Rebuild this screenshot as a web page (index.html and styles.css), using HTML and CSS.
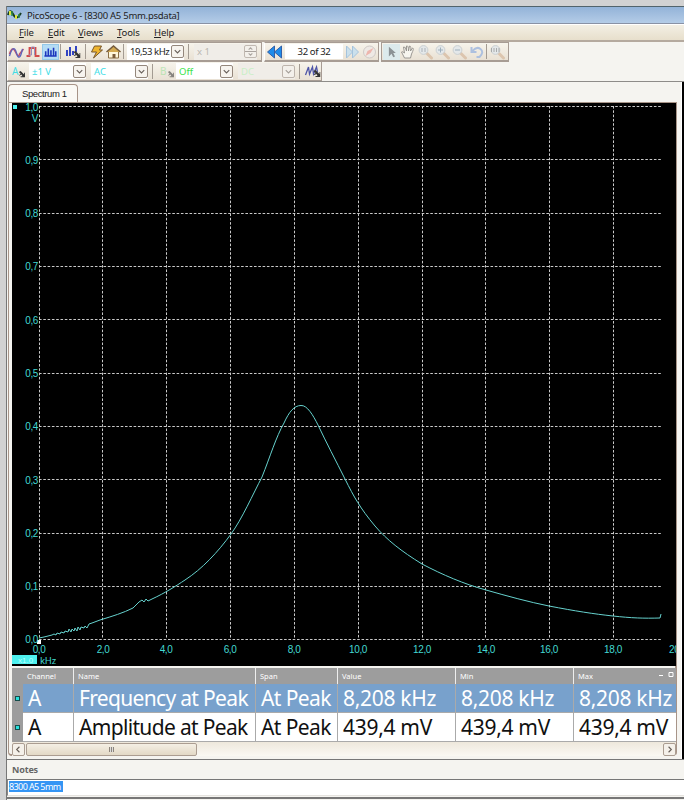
FILE: index.html
```html
<!DOCTYPE html>
<html lang="en">
<head>
	<meta charset="utf-8">
	<title>PicoScope 6 - [8300 A5 5mm.psdata]</title>
	<link rel="stylesheet" href="styles.css">
</head>
<body>
<svg width="0" height="0" class="defs">
	<symbol id="lens" viewBox="0 0 16 16">
		<path d="M9 9l5 5" stroke="#dcc5ae" stroke-width="3" stroke-linecap="round"/>
		<circle cx="6" cy="6" r="4.4" fill="#e4e8ea" stroke="#cbd0d2"/>
	</symbol>
	<symbol id="arrow" viewBox="0 0 8 8"><path d="M1 1l2 2-2 2h1l2-1 1 2H3v1h5V2H7v2L5 2 3 0z" fill="#333"/></symbol>
</svg>
<div class="window">
	<div class="title">
		<svg width="15" height="14"><path d="M1 7Q3 0 6 6T12 8L14 5" fill="none" stroke="#173c22" stroke-width="2"/><path d="M3 3v4M9 7v4" stroke="#dce83c" stroke-width="2"/><path d="M5 3v5M12 6v4" stroke="#2c8b4a" stroke-width="1.500"/></svg>
		<span>PicoScope 6 - [8300 A5 5mm.psdata]</span>
	</div>
	<div class="menu">
		<span class="m1"><u>F</u>ile</span><span class="m2"><u>E</u>dit</span><span class="m3"><u>V</u>iews</span><span class="m4"><u>T</u>ools</span><span class="m5"><u>H</u>elp</span>
	</div>

	<div class="bar">
		<div class="group modes">
			<svg class="ico" viewBox="0 0 16 16"><path d="M1 10Q4 1 7 8T11 10L15 5" fill="none" stroke="#c3526a" stroke-width="1.500"/><path d="M1 12Q5-1 8 9T14 5" fill="none" stroke="#5b65bd" stroke-width="1.300"/></svg>
			<svg class="ico" viewBox="0 0 16 16"><path d="M1 12h3V4h6v8h4" fill="none" stroke="#d34a4a" stroke-width="1.800"/><path d="M3 11h3V3h3v8" fill="none" stroke="#9690bd"/></svg>
			<svg class="ico on" viewBox="0 0 16 16"><path d="M2.500 7v5M5.500 4v8M8.500 6v6M11.500 3v9M14 7v5M1 12.500h14" stroke="#1c35bd" stroke-width="1.800"/></svg>
			<i class="sep"></i>
			<svg class="ico" viewBox="0 0 16 16"><path d="M2.500 6v6M5.500 3v9M8.500 7v4M11.500 2v6" stroke="#293cc0" stroke-width="1.900"/><use href="#arrow" x="8" y="7" width="8" height="8"/></svg>
			<i class="sep sep2"></i>
			<svg class="ico" viewBox="0 0 16 16"><path d="M6 2h7l-2 4h3L5 14l3-6H3z" fill="#efb52f" stroke="#76552b"/></svg>
			<svg class="ico" viewBox="0 0 16 16"><path d="M3 8v6h10V8" fill="#fff7dc" stroke="#8b7047"/><path d="M1 8l7-6 7 6" fill="#d4aa52" stroke="#745b3d" stroke-width="1.500"/><path d="M7 10h3v4H7z" fill="#7b5c3b"/></svg>
			<i class="sep"></i>
			<div class="combo freq"><span>19,53 kHz</span><b><svg viewBox="0 0 12 12"><path d="M3 4.500l3 3 3-3"/></svg></b></div>
			<i class="sep sep3"></i>
			<div class="combo mult"><span>x 1</span><b><svg viewBox="0 0 12 12"><path d="M4 4l2-2 2 2M4 8l2 2 2-2M0 6h12"/></svg></b></div>
		</div>
		<div class="group pages">
			<svg class="ico" viewBox="0 0 16 16"><path d="M8 2v12L1 8zM15 2v12L8 8z" fill="#1e8bea" stroke="#3260a8"/></svg>
			<div class="count">32 of 32</div>
			<svg class="ico" viewBox="0 0 16 16"><path d="M2 2v12l6-6zM8 2v12l6-6z" fill="#cbe0ec" stroke="#a5c3dc"/></svg>
			<svg class="ico" viewBox="0 0 16 16"><circle cx="8" cy="8" r="6" fill="#eee9e5" stroke="#cfcac7"/><path d="M4 12l2-5 6-3-3 5z" fill="#edb5ad"/></svg>
		</div>
		<div class="group tools">
			<svg class="ico on pale" viewBox="0 0 16 16"><path d="M5 2v11l3-3 2 4 2-1-2-4h3z" fill="#8b9295"/></svg>
			<svg class="ico" viewBox="0 0 16 16"><path d="M4 14L1 8q1-1 3 1L3 3q2-1 3 4V2q2-1 2 5l1-5q2 0 1 5l2-3q2 0-1 6l-1 4z" fill="#f7f5ef" stroke="#928f8a" stroke-width=".9"/></svg>
			<svg class="ico" viewBox="0 0 16 16"><use href="#lens"/><path d="M4.500 4v4M7.500 4v4" stroke="#abb2b8"/></svg>
			<svg class="ico" viewBox="0 0 16 16"><use href="#lens"/><path d="M3.500 6h5M6 3.500v5" stroke="#9eb0bd"/></svg>
			<svg class="ico" viewBox="0 0 16 16"><use href="#lens"/><path d="M3.500 6h5" stroke="#9eb0bd"/></svg>
			<svg class="ico" viewBox="0 0 16 16"><path d="M3 3v5h5M4 7q4-5 8-2t-1 8H8" fill="none" stroke="#adc0df" stroke-width="2"/></svg>
			<i class="sep"></i>
			<svg class="ico" viewBox="0 0 16 16"><use href="#lens"/><path d="M2 4v4M4.500 4v4M7 4v4M9.500 4v4" stroke="#a8aaaa"/></svg>
		</div>
	</div>

	<div class="bar bar2">
		<div class="group channels">
			<div class="ch">A<svg viewBox="0 0 8 8"><use href="#arrow"/></svg></div>
			<div class="combo cyan"><span>±1 V</span><b><svg viewBox="0 0 12 12"><path d="M3 4.500l3 3 3-3"/></svg></b></div>
			<div class="combo cyan ac"><span>AC</span><b><svg viewBox="0 0 12 12"><path d="M3 4.500l3 3 3-3"/></svg></b></div>
			<i class="sep"></i>
			<div class="ch chb">B<svg viewBox="0 0 8 8"><use href="#arrow"/></svg></div>
			<div class="combo green"><span>Off</span><b><svg viewBox="0 0 12 12"><path d="M3 4.500l3 3 3-3"/></svg></b></div>
			<div class="combo dc"><span>DC</span><b><svg viewBox="0 0 12 12"><path d="M3 4.500l3 3 3-3"/></svg></b></div>
			<i class="sep"></i>
			<svg class="ico" viewBox="0 0 16 16"><path d="M1 12L4 4l1 7 3-7 1 7 3-7 1 5" fill="none" stroke="#4e55a8" stroke-width="1.300"/><use href="#arrow" x="8" y="7" width="8" height="8"/></svg>
		</div>
	</div>

	<div class="content">
		<div class="tab">Spectrum 1</div>
		<div class="panel">
			<svg class="chart" width="664" height="563" viewBox="12 103 664 563">
				<path class="grid" d="M39 106.500H661M39 159.500H661M39 213.500H661M39 266.500H661M39 319.500H661M39 373.500H661M39 426.500H661M39 479.500H661M39 533.500H661M39 586.500H661M39 639.500H661"/>
				<path class="grid" d="M39.500 106V639M102.500 106V639M166.500 106V639M230.500 106V639M294.500 106V639M358.500 106V639M422.500 106V639M485.500 106V639M549.500 106V639M613.500 106V639"/>
				<path class="curve" d="M39 638l5-1 4-1 4-1 2-1 2 1 1-2 3 1 1-2 3 1 1-2 3 1 1-3 2 3 1-3 2 2 1-3 2 3 1-4 2 3 1-3 3 1 1-2 2 2 2-4 3-1 8-3C113 616 123 613 133 608L139 602L142 600L144 602L146 599L148 601L152 599C165 593 176 586 185 580C202 569 218 552 231 534C242 519 253 494 262 477C270 457 276 437 284 423C289 412 294 405.500 301 405.500C307 405 313 415 318 425C326 442 336 461 345 479C354 497 360 508 375 526C387 540 401 551 422 564C443 575 464 584 486 590C507 596 529 602 549 606C575 611 594 614 613 616C631 618 644 618.500 660 618L661 614"/>
				<path d="M13 105h4v4h-4zM12 655h25v9H12z" fill="#4ef0ee"/>
				<path d="M37 640h4v4h-4z" fill="#fff"/>
				<g class="ylab">
					<text x="38" y="111">1,0</text><text x="38" y="122">V</text>
					<text x="38" y="164">0,9</text><text x="38" y="217">0,8</text><text x="38" y="270">0,7</text><text x="38" y="324">0,6</text><text x="38" y="377">0,5</text><text x="38" y="430">0,4</text><text x="38" y="484">0,3</text><text x="38" y="537">0,2</text><text x="38" y="590">0,1</text><text x="38" y="643">0,0</text>
				</g>
				<g class="xlab">
					<text x="39" y="653">0,0</text><text x="103" y="653">2,0</text><text x="166" y="653">4,0</text><text x="230" y="653">6,0</text><text x="294" y="653">8,0</text><text x="358" y="653">10,0</text><text x="422" y="653">12,0</text><text x="486" y="653">14,0</text><text x="549" y="653">16,0</text><text x="613" y="653">18,0</text><text x="678" y="653">20,0</text>
				</g>
				<text class="scale" x="18" y="663">x1.0</text><text class="unit" x="40" y="664">kHz</text>
			</svg>
			<div class="table">
				<div class="row head"><i></i><span>Channel</span><span>Name</span><span>Span</span><span>Value</span><span>Min</span><span>Max<svg width="18" height="8"><path d="M1 4.500h4M11 1.500h4v4h-4z" fill="none" stroke="#fff"/></svg></span></div>
				<div class="row sel"><i></i><span>A</span><span class="name">Frequency at Peak</span><span class="at">At Peak</span><span>8,208 kHz</span><span>8,208 kHz</span><span>8,208 kHz</span></div>
				<div class="row"><i></i><span>A</span><span class="name">Amplitude at Peak</span><span class="at">At Peak</span><span>439,4 mV</span><span>439,4 mV</span><span>439,4 mV</span></div>
			</div>
			<div class="scroll">
				<b><svg viewBox="0 0 12 12"><path d="M7 3L4 6l3 3"/></svg></b>
				<div class="thumb"><i></i></div>
				<b><svg viewBox="0 0 12 12"><path d="M5 3l3 3-3 3"/></svg></b>
			</div>
		</div>
	</div>
	<div class="notes">
		<h3>Notes</h3>
		<div class="text"><span>8300 A5 5mm</span></div>
	</div>
</div>
</body>
</html>
```
FILE: styles.css
```css
*{margin:0;padding:0;box-sizing:border-box;}
body
{
	width:684px;
	height:800px;
	overflow:hidden;
	background:#d2d2d2;
	padding:6px 0 0 6px;
	font-family:"Noto Sans","Open Sans",sans-serif;
	color:#222;
}
svg{display:block;flex:none;}
.defs{position:absolute;}
.window
{
	width:678px;
	height:794px;
	background:#f5f4f0;
	border-left:1px solid #777;
}
.title
{
	height:18px;
	display:flex;
	align-items:center;
	border-top:1px solid #52646c;
	border-bottom:1px solid #8992a5;
	background:linear-gradient(#93b3d8,#b4cce7);
	font-size:9.5px;
	letter-spacing:-.27px;
}
.title span{margin-left:5px;white-space:nowrap;}
.menu
{
	height:18px;
	display:flex;
	background:linear-gradient(#f3efe4,#e7dfcc);
	border-top:1px solid #fff;
	border-bottom:2px solid #b5aa9f;
	font-size:9.5px;
	letter-spacing:-.1px;
	line-height:15px;
	padding-left:12px;
}
.menu u{text-underline-offset:1px;}
.m1{width:29px;}
.m2{width:30px;}
.m3{width:39px;}
.m4{width:37px;}
.bar
{
	height:20px;
	display:flex;
	gap:2px;
}
.group
{
	height:20px;
	display:flex;
	align-items:center;
	background:linear-gradient(#f7f4ec,#e9e1d4);
	border:1px solid #a79c94;
	border-left-color:#fff;
	border-bottom-width:2px;
}
.modes{width:255px;}
.pages{width:115px;}
.tools{width:128px;border-left-color:#a79c94;}
.ico{width:17px;height:16px;}
.on{background:#b4dcf5;border:1px solid #94c8e8;}
.pale{background:#dceaec;border-color:#dceaec;}
.sep{flex:none;width:1px;height:15px;background:#a39b92;margin:0 3px;}
.modes .sep{margin-left:1px;}
.modes .sep2{margin:0 2px 0 4px;}
.modes .sep3{margin:0 5px 0 4px;}
.combo
{
	width:57px;
	height:16px;
	flex:none;
	display:flex;
	align-items:center;
	justify-content:space-between;
	background:#fff;
	font-size:9.5px;
	padding-left:3px;
	white-space:nowrap;
}
.combo b
{
	width:13px;
	height:13px;
	flex:none;
	border:1px solid #94877c;
	border-radius:2px;
	background:#f7f4ef;
}
b svg{width:11px;height:11px;}
b path{fill:none;stroke:#665e58;stroke-width:1.2;}
.freq{letter-spacing:-.45px;}
.mult{width:63px;background:#f0ede8;color:#bbb7b1;}
.mult b{opacity:.5;}
.pages{padding-left:1px;}
.count
{
	width:58px;
	height:15px;
	background:#fff;
	font-size:9.5px;
	letter-spacing:-.35px;
	line-height:15px;
	text-align:center;
	margin:0 1px 0 2px;
}
.tools .sep{margin:0 2px 0 1px;}
.tools{padding-left:1px;}
.bar2
{
	height:20px;
	border-bottom:1px solid #8e8c89;
}
.bar2 .group
{
	width:315px;
	height:19px;
	border-top:0;
	border-bottom-width:1px;
}
.ch
{
	width:21px;
	height:15px;
	position:relative;
	color:#43dce5;
	font-size:10px;
	line-height:14px;
	padding-left:4px;
}
.ch svg{position:absolute;left:10px;top:7px;width:7px;height:7px;}
.cyan{color:#3ddde6;}
.ac{margin-left:5px;}
.channels .sep{margin:0 4px;}
.chb{color:#93e093;opacity:.55;padding-left:3px;width:19px;}
.green{color:#38e349;}
.dc{margin-left:5px;background:#f0ede8;color:#c9efc6;}
.dc b{opacity:.55;}
.content
{
	height:677px;
	margin-right:2px;
	padding:2px 5px 0 1px;
	border-right:1px solid #fff;
	box-shadow:2px 0 #000;
}
.tab
{
	width:70px;
	height:18px;
	background:#faf9f5;
	border:1px solid #a79488;
	border-bottom:0;
	border-radius:4px 4px 0 0;
	font:9.5px/18px "Liberation Sans",sans-serif;
	letter-spacing:-.4px;
	padding-left:13px;
	white-space:nowrap;
}
.panel
{
	width:669px;
	height:654px;
	border:1px solid #a79488;
	border-right-width:2px;
	border-bottom-width:2px;
	border-radius:0 0 4px 4px;
	padding:0 0 0 3px;
}
.chart{background:#000;}
.grid{stroke:#c9c9c9;stroke-dasharray:2.600 1.700;fill:none;}
.curve{fill:none;stroke:#66d2ce;stroke-width:1;}
.chart text{font:10px "Liberation Sans",sans-serif;fill:#43d9d2;}
.ylab{text-anchor:end;}
.xlab{text-anchor:middle;}
.chart .ylab text,.chart .xlab text{letter-spacing:-.4px;}
.chart .scale{font-size:8px;fill:#b9fffd;}
.chart .unit{font:9.5px "Noto Sans",sans-serif;letter-spacing:-.2px;}
.table
{
	margin-top:2px;
	background:#9d9d9d;
	overflow:hidden;
	width:664px;
}
.row
{
	height:29px;
	display:grid;
	grid-template-columns:11px 51px 182px 82px 118px 118px 102px;
	font-size:21px;
	line-height:28px;
	letter-spacing:-.3px;
}
.row span
{
	background:#fff;
	border-right:1px solid #aaa;
	border-bottom:1px solid #aaa;
	padding-left:5px;
	white-space:nowrap;
	color:#111;
	overflow:hidden;
}
.row span:last-child{border-right:0;}
.row .name{letter-spacing:-.67px;}
.row .at{letter-spacing:-.6px;}
.row i
{
	width:5px;
	height:5px;
	align-self:center;
	justify-self:center;
	background:#28e0dc;
	border:1px solid #164d4b;
}
.row.sel span{background:#78a1cc;color:#fff;}
.head
{
	height:16px;
	font:7.5px/16px "Noto Sans",sans-serif;
	letter-spacing:0;
}
.head i{visibility:hidden;}
.row.head span
{
	background:#9d9d9d;
	color:#fff;
	border-bottom:0;
	border-right-color:#eee;
	padding-left:4px;
}
.head span:last-child{display:flex;justify-content:space-between;}
.head svg{margin-top:3px;}
.scroll
{
	height:14px;
	width:664px;
	display:flex;
	align-items:center;
	background:linear-gradient(#eee8dc,#faf8f3);
}
.scroll b
{
	width:13px;
	height:13px;
	border:1px solid #ab9d91;
	border-radius:2px;
	background:#f5f1ea;
}
.scroll b:last-child{margin-left:auto;}
.thumb
{
	width:171px;
	height:13px;
	margin-left:1px;
	border:1px solid #ab9d91;
	border-radius:2px;
	background:linear-gradient(#f4efe4,#e3d9c6);
	display:flex;
	align-items:center;
	justify-content:center;
}
.thumb i
{
	width:5px;
	height:5px;
	background:repeating-linear-gradient(90deg,#8d857b 0 1px,#ddd 1px 2px);
}
.notes
{
	position:relative;
	height:40px;
	background:#f5f4f0;
	border-top:1px solid #777;
	border-bottom:2px solid #777;
}
.notes h3
{
	height:19px;
	font-size:9px;
	letter-spacing:-.15px;
	line-height:19px;
	padding-left:5px;
	color:#666;
}
.text
{
	height:17px;
	background:#fff;
	border-top:1px solid #777;
	border-left:1px solid #888;
	border-bottom:1px solid #e5e3df;
	padding:1px 0 0 1px;
	font-size:9px;
	line-height:11px;
	letter-spacing:-.6px;
}
.text span
{
	display:inline-block;
	width:54px;
	height:11px;
	background:#3495f4;
	color:#fff;
	vertical-align:top;
	white-space:nowrap;
}
```
